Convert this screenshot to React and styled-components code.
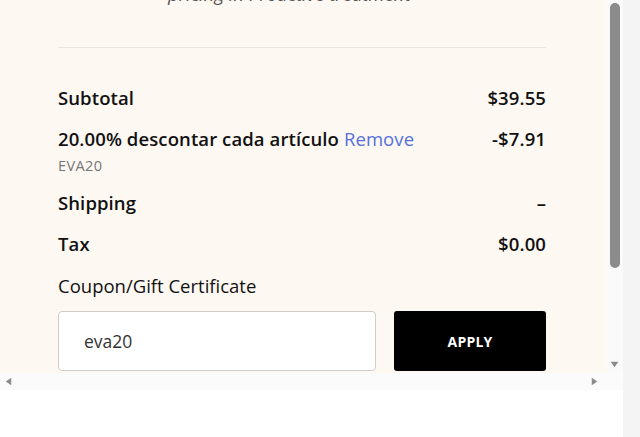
import styled, { createGlobalStyle } from 'styled-components';

const GlobalStyle = createGlobalStyle`
    html, body {
        margin: 0;
        padding: 0;
        background: #ffffff;
    }
    body {
        font-family: 'Open Sans', 'Lato', sans-serif;
        color: #111111;
    }
`;

const Page = styled.div`
    display: flex;
    width: 640px;
    height: 437px;
    overflow: hidden;
`;

const Frame = styled.div`
    display: grid;
    grid-template-columns: 606px 17px;
    grid-template-rows: 373px 17px;
    align-content: start;
    width: 623px;
`;

const PageTrack = styled.div`
    width: 17px;
    background: #f4f4f4;
`;

const Viewport = styled.div`
    background: #fdf8f2;
    overflow: hidden;
`;

const Summary = styled.div`
    margin-top: -18px;
    padding: 0 60px 0 58px;
    display: flex;
    flex-direction: column;
`;

const Note = styled.p`
    margin: 0 0 0 110px;
    font-size: 18.5px;
    line-height: 24px;
    font-style: italic;
    color: #555555;
`;

const Divider = styled.hr`
    margin: 41px 0 38px;
    border: 0;
    border-top: 1px solid #e9e5e0;
`;

const Row = styled.div`
    display: flex;
    justify-content: space-between;
    align-items: flex-start;
    margin-bottom: ${p => p.$gap ?? 17}px;
    font-size: 18.5px;
    line-height: 24px;
    font-weight: 600;
    letter-spacing: 0.1px;
`;

const Remove = styled.a`
    color: #5670e0;
    font-weight: 500;
    text-decoration: none;
    cursor: pointer;
`;

const Code = styled.div`
    margin-top: 6px;
    font-size: 14.5px;
    line-height: 18px;
    font-weight: 500;
    letter-spacing: 0.4px;
    color: #777777;
`;

const Label = styled.div`
    font-size: 18.5px;
    line-height: 24px;
    font-weight: 500;
    margin-bottom: 13px;
`;

const CouponForm = styled.form`
    display: flex;
    gap: 18px;
`;

const Input = styled.input`
    box-sizing: border-box;
    width: 318px;
    height: 60px;
    padding: 0 25px;
    border: 1px solid #d0ccc8;
    border-radius: 4px;
    background: #ffffff;
    font-family: inherit;
    font-size: 17.5px;
    color: #333333;
    outline: none;
`;

const ApplyButton = styled.button`
    flex: 1;
    height: 60px;
    border: 0;
    border-radius: 3px;
    background: #000000;
    color: #ffffff;
    font-family: inherit;
    font-size: 14px;
    font-weight: 700;
    letter-spacing: 0.2px;
    cursor: pointer;
`;

const VTrack = styled.div`
    background: #fafafa;
    display: flex;
    flex-direction: column;
    align-items: center;
    padding-top: 3px;
    box-sizing: border-box;
`;

const Thumb = styled.div`
    width: 10px;
    height: 265px;
    border-radius: 5px;
    background: #8b8b8b;
`;

const HTrack = styled.div`
    background: #fbfbfb;
    display: flex;
    justify-content: space-between;
    align-items: center;
    padding: 0 6px 0 3px;
`;

const Corner = styled.div`
    background: #fbfbfb;
`;

const Arrow = styled.svg`
    width: 11px;
    height: 11px;
    fill: #8b8b8b;
    margin-top: ${p => p.$top || 0}px;
`;

export default function App() {
    return (
        <>
            <GlobalStyle />
            <Page>
                <Frame>
                    <Viewport>
                        <Summary>
                            <Note>pricing in Proactive treatment</Note>
                            <Divider />
                            <Row>
                                <span>Subtotal</span>
                                <span>$39.55</span>
                            </Row>
                            <Row $gap={16}>
                                <div>
                                    20.00% descontar cada artículo <Remove>Remove</Remove>
                                    <Code>EVA20</Code>
                                </div>
                                <span>-$7.91</span>
                            </Row>
                            <Row>
                                <span>Shipping</span>
                                <span>–</span>
                            </Row>
                            <Row $gap={18}>
                                <span>Tax</span>
                                <span>$0.00</span>
                            </Row>
                            <Label>Coupon/Gift Certificate</Label>
                            <CouponForm onSubmit={e => e.preventDefault()}>
                                <Input defaultValue="eva20" />
                                <ApplyButton type="submit">APPLY</ApplyButton>
                            </CouponForm>
                        </Summary>
                    </Viewport>
                    <VTrack>
                        <Thumb />
                        <Arrow viewBox="0 0 10 10" $top={91}>
                            <path d="M1.5 2.5h7L5 7.5z" />
                        </Arrow>
                    </VTrack>
                    <HTrack>
                        <Arrow viewBox="0 0 10 10">
                            <path d="M7.5 1.5v7L2.5 5z" />
                        </Arrow>
                        <Arrow viewBox="0 0 10 10">
                            <path d="M2.5 1.5v7L7.5 5z" />
                        </Arrow>
                    </HTrack>
                    <Corner />
                </Frame>
                <PageTrack />
            </Page>
        </>
    );
}
